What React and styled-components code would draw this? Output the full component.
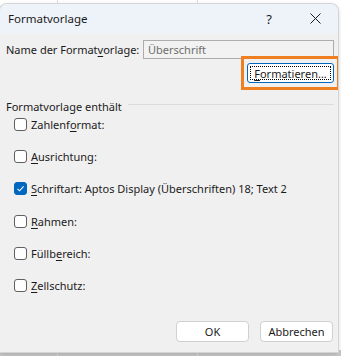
import React from "react";
import styled, { createGlobalStyle } from "styled-components";

const GlobalStyle = createGlobalStyle`
	html, body {
		margin: 0;
		padding: 0;
		width: 341px;
		height: 356px;
		overflow: hidden;
	}
	body {
		font-family: "Noto Sans", "Open Sans", sans-serif;
		font-size: 11px;
		color: #1b1b1b;
	}
`;

const Backdrop = styled.div`
	width: 341px;
	height: 356px;
	padding-top: 4px;
	box-sizing: border-box;
	background:
		linear-gradient(to right, transparent 57px, #dcdcdc 57px, #dcdcdc 58px, transparent 58px),
		linear-gradient(to right, transparent 197px, #dcdcdc 197px, #dcdcdc 198px, transparent 198px),
		linear-gradient(to bottom, #ffffff 0, #ffffff 350px, #c9c9c9 350px);
`;

const Dialog = styled.div`
	position: relative;
	width: 338px;
	height: 348px;
	display: flex;
	flex-direction: column;
	background: #f0f0f0;
	border-radius: 7px 7px 0 0;
	box-shadow: 0 0 0 1px #d4d4d4, 0 2px 6px rgba(0, 0, 0, 0.18);
	overflow: hidden;
`;

const TitleBar = styled.div`
	height: 29px;
	display: flex;
	align-items: center;
	padding-left: 8px;
	background: #eef3f9;
`;

const Title = styled.span`
	flex: 1;
	font-size: 11.5px;
`;

const TitleButton = styled.div`
	width: 46px;
	height: 29px;
	display: flex;
	align-items: center;
	justify-content: center;
	font-size: 13px;
`;

const Body = styled.div`
	flex: 1;
	padding: 7px 4px 0 6px;
	display: flex;
	flex-direction: column;
`;

const NameRow = styled.div`
	display: flex;
	align-items: center;
	height: 19px;
`;

const Label = styled.span`
	width: 137px;
	white-space: nowrap;
`;

const NameInput = styled.div`
	flex: 1;
	height: 19px;
	box-sizing: border-box;
	border: 1px solid #acacac;
	background: #f2f2f2;
	color: #6d6d6d;
	padding-left: 4px;
	display: flex;
	align-items: center;
`;

const ButtonRow = styled.div`
	display: flex;
	justify-content: flex-end;
	margin-top: 4px;
`;

const FormatButton = styled.div`
	position: relative;
	width: 87px;
	height: 20px;
	box-sizing: border-box;
	border: 1px solid #0067c0;
	border-radius: 3px;
	background: #ffffff;
	display: flex;
	align-items: center;
	justify-content: center;
	&::after {
		content: "";
		position: absolute;
		inset: 2px;
		border: 1px dotted #000;
	}
`;

const Highlight = styled.div`
	position: absolute;
	left: 241px;
	top: 52px;
	width: 99px;
	height: 34px;
	box-sizing: border-box;
	border: 3px solid #f07f22;
	pointer-events: none;
`;

const GroupHeader = styled.div`
	display: flex;
	align-items: center;
	gap: 6px;
	margin-top: 15px;
	height: 16px;
	&::after {
		content: "";
		flex: 1;
		height: 1px;
		background: #dcdcdc;
		margin-top: -3px;
	}
`;

const OptionList = styled.div`
	display: flex;
	flex-direction: column;
	gap: 12.4px;
	margin-top: 0;
	padding-left: 8px;
`;

const Option = styled.div`
	display: flex;
	align-items: center;
	gap: 4px;
	height: 20px;
`;

const Box = styled.div`
	width: 13px;
	height: 13px;
	box-sizing: border-box;
	border-radius: 3px;
	border: 1px solid ${(p) => (p.checked ? "#0067c0" : "#5f5f5f")};
	background: ${(p) => (p.checked ? "#0067c0" : "#ffffff")};
	display: flex;
	align-items: center;
	justify-content: center;
`;

const Key = styled.span`
	text-decoration: underline;
	text-underline-offset: 2px;
`;

const Footer = styled.div`
	display: flex;
	justify-content: flex-end;
	gap: 11px;
	padding: 0 5px 10px 0;
`;

const DialogButton = styled.div`
	width: 73px;
	height: 21px;
	box-sizing: border-box;
	border: 1px solid #d0d0d0;
	border-radius: 4px;
	background: #ffffff;
	display: flex;
	align-items: center;
	justify-content: center;
`;

const Check = () => (
	<svg width="9" height="9" viewBox="0 0 9 9">
		<path d="M1.5 4.8 L3.6 6.8 L7.6 2.4" fill="none" stroke="#fff" strokeWidth="1.1" />
	</svg>
);

const CloseIcon = () => (
	<svg width="11" height="11" viewBox="0 0 11 11">
		<path d="M0.5 0.5 L10.5 10.5 M10.5 0.5 L0.5 10.5" stroke="#1b1b1b" strokeWidth="1" />
	</svg>
);

const options = [
	{ before: "Zahlenf", key: "o", after: "rmat:" },
	{ before: "", key: "A", after: "usrichtung:" },
	{ before: "", key: "S", after: "chriftart: Aptos Display (Überschriften) 18; Text 2", checked: true },
	{ before: "", key: "R", after: "ahmen:" },
	{ before: "Füllb", key: "e", after: "reich:" },
	{ before: "", key: "Z", after: "ellschutz:" },
];

const App = () => (
	<>
		<GlobalStyle />
		<Backdrop>
			<Dialog>
				<TitleBar>
					<Title>Formatvorlage</Title>
					<TitleButton>?</TitleButton>
					<TitleButton>
						<CloseIcon />
					</TitleButton>
				</TitleBar>
				<Body>
					<NameRow>
						<Label>
							Name der Format<Key>v</Key>orlage:
						</Label>
						<NameInput>Überschrift</NameInput>
					</NameRow>
					<ButtonRow>
						<FormatButton>
							<span>
								<Key>F</Key>ormatieren...
							</span>
						</FormatButton>
					</ButtonRow>
					<GroupHeader>Formatvorlage enthält</GroupHeader>
					<OptionList>
						{options.map((o) => (
							<Option key={o.after}>
								<Box checked={o.checked}>{o.checked && <Check />}</Box>
								<span>
									{o.before}
									<Key>{o.key}</Key>
									{o.after}
								</span>
							</Option>
						))}
					</OptionList>
				</Body>
				<Footer>
					<DialogButton>OK</DialogButton>
					<DialogButton>Abbrechen</DialogButton>
				</Footer>
				<Highlight />
			</Dialog>
		</Backdrop>
	</>
);

export default App;
